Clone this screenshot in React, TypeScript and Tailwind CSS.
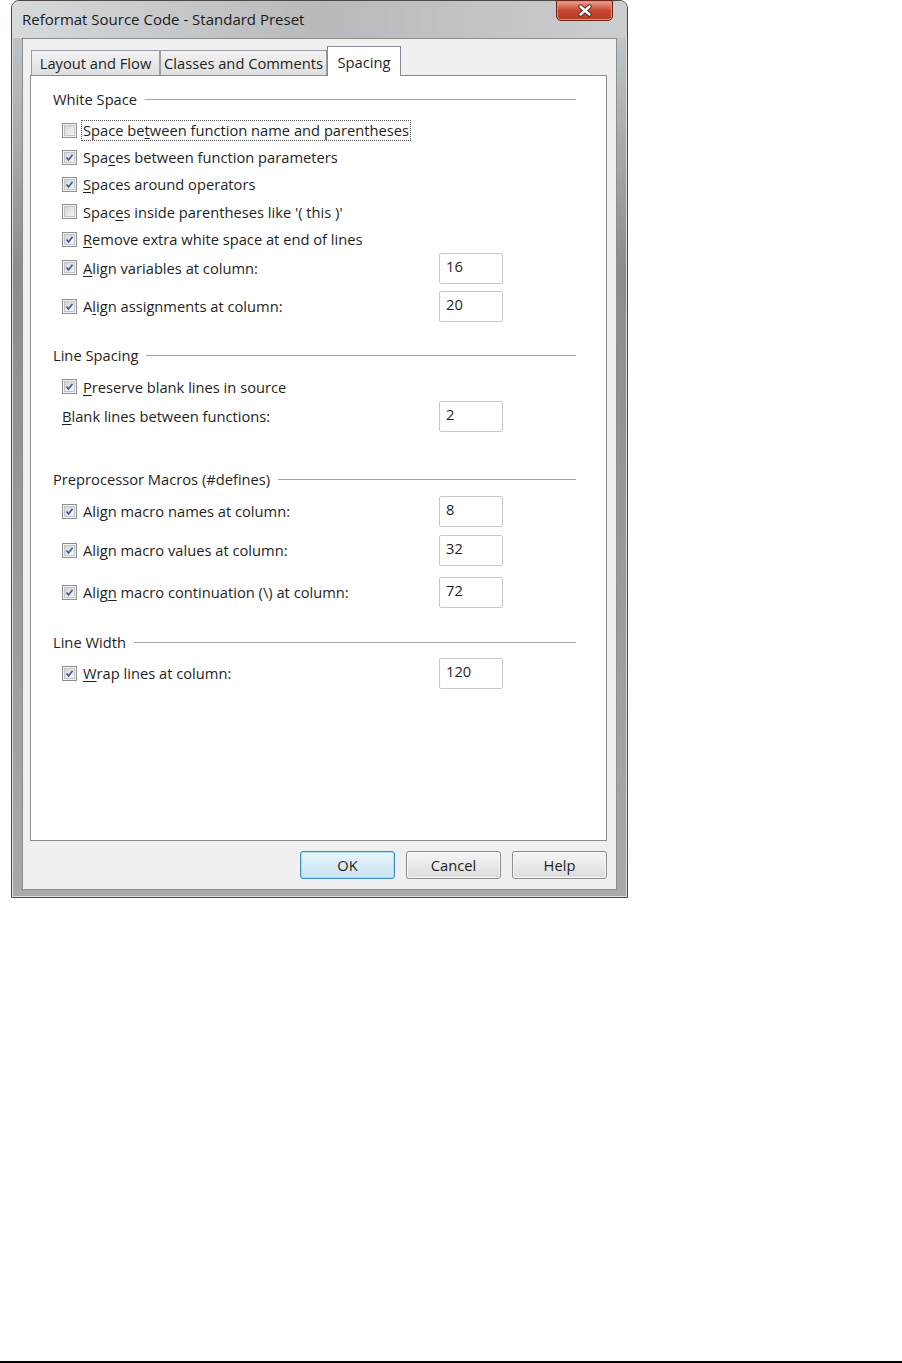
import type { ReactNode } from 'react';

const ink = 'text-[#1f1f1f]';

function Key({ children }: { children: ReactNode }) {
  return <span className="underline decoration-1 underline-offset-[2px]">{children}</span>;
}

function Check({ on }: { on: boolean }) {
  return (
    <span className="flex h-[15px] w-[15px] shrink-0 items-center justify-center border border-[#8e8f8f] bg-[#f4f4f4]">
      <span className="flex h-[11px] w-[11px] items-center justify-center border border-[#c4c4c4] bg-gradient-to-br from-[#d5d5d5] to-[#f7f7f7]">
        {on && (
          <svg width="11" height="11" viewBox="0 0 11 11">
            <path d="M1.8 5.4 L4.3 8.4 L9.2 2" fill="none" stroke="#3a5ba0" strokeWidth="2" />
          </svg>
        )}
      </span>
    </span>
  );
}

function Field({ value }: { value: string }) {
  return (
    <div className={`h-[31px] w-[64px] shrink-0 rounded-[2px] border border-[#c8c8c8] bg-white pl-[6px] pt-[2px] text-[14.7px] leading-[20px] ${ink}`}>
      {value}
    </div>
  );
}

function Header({ title, className }: { title: string; className: string }) {
  return (
    <div className={`flex h-[20px] items-center gap-[8px] pl-[22px] pr-[30px] text-[14.7px] ${ink} ${className}`}>
      <span className="whitespace-nowrap">{title}</span>
      <span className="h-px flex-1 bg-[#a5a5a5] shadow-[0_1px_0_#fff]" />
    </div>
  );
}

function Row({
  on,
  label,
  value,
  className,
  focus,
}: {
  on?: boolean;
  label: ReactNode;
  value?: string;
  className: string;
  focus?: boolean;
}) {
  return (
    <div className={`flex items-center pl-[31px] text-[14.7px] ${ink} ${className}`}>
      <div className="flex w-[377px] items-center gap-[4px]">
        <Check on={!!on} />
        <span className={focus ? 'whitespace-nowrap border border-dotted border-[#555] px-[1px] leading-[19px]' : 'whitespace-nowrap px-[2px]'}>
          {label}
        </span>
      </div>
      {value && <Field value={value} />}
    </div>
  );
}

function Tab({ label, active, className }: { label: string; active?: boolean; className: string }) {
  if (active) {
    return (
      <div className={`relative z-10 -mb-px flex h-[30px] items-start justify-center border border-b-0 border-[#898c95] bg-white pt-[4px] text-[14.7px] ${ink} ${className}`}>
        {label}
      </div>
    );
  }
  return (
    <div className={`flex h-[25px] items-center justify-center border border-b-0 border-[#9a9ca3] bg-gradient-to-b from-[#f3f3f3] to-[#dedede] text-[14.7px] ${ink} ${className}`}>
      {label}
    </div>
  );
}

function Button({ label, primary }: { label: string; primary?: boolean }) {
  return (
    <div
      className={`flex h-[28px] w-[95px] items-center justify-center rounded-[3px] border text-[14.7px] ${ink} ${
        primary
          ? 'border-[#3c8ccc] bg-gradient-to-b from-[#eaf6fd] to-[#c8e2f3] shadow-[inset_0_0_0_1px_#a9dcf5]'
          : 'border-[#8a8a8a] bg-gradient-to-b from-[#f6f6f6] to-[#dcdcdc] shadow-[inset_0_0_0_1px_#fcfcfc]'
      }`}
    >
      {label}
    </div>
  );
}

function Window() {
  return (
    <div className="relative flex h-[898px] w-[617px] flex-col rounded-t-[8px] border border-[#4a4a4a] bg-gradient-to-b from-[#c9cdd0] via-[#8c8c8c] via-30% to-[#a9a9a9] px-[10px] pb-[7px] shadow-[inset_0_0_0_1px_#dcdcdc]">
      {/* title bar */}
      <div className="-mx-[10px] flex h-[37px] items-center rounded-t-[7px] bg-gradient-to-r from-[#d6dadd] via-[#b7b9ba] via-50% to-[#cbcdce] pl-[10px] text-[15px] text-[#1b1b1b]">
        Reformat Source Code - Standard Preset
      </div>
      <div className="absolute right-[14px] top-[-1px] flex h-[21px] w-[57px] items-center justify-center rounded-b-[5px] border border-[#6a2418] bg-gradient-to-b from-[#e9a390] via-[#c9472f] via-50% to-[#b33c24] shadow-[inset_0_0_0_1px_#ee8c72]">
        <svg width="16" height="13" viewBox="0 0 16 13">
          <path d="M3.5 2.5 L12.5 10.5 M12.5 2.5 L3.5 10.5" stroke="#5a2a22" strokeWidth="4.4" strokeLinecap="round" />
          <path d="M3.5 2.5 L12.5 10.5 M12.5 2.5 L3.5 10.5" stroke="#ffffff" strokeWidth="2.4" strokeLinecap="round" />
        </svg>
      </div>

      {/* client area */}
      <div className="flex flex-1 flex-col border border-[#8d8d8d] bg-[#f0f0f0] pl-[7px] pr-[9px] pt-[7px]">
        <div className="flex h-[29px] items-end pl-px">
          <Tab label="Layout and Flow" className="w-[129px]" />
          <Tab label="Classes and Comments" className="w-[167px]" />
          <Tab label="Spacing" active className="w-[74px]" />
        </div>
        <div className="flex h-[766px] w-[577px] flex-col border border-[#898c95] bg-white pt-[13px]">
          <Header title="White Space" className="" />
          <Row
            on={false}
            focus
            className="mt-[7px] h-[28px]"
            label={
              <>
                Space be<Key>t</Key>ween function name and parentheses
              </>
            }
          />
          <Row on className="h-[27px]" label={<>Spa<Key>c</Key>es between function parameters</>} />
          <Row on className="h-[27px]" label={<><Key>S</Key>paces around operators</>} />
          <Row on={false} className="h-[28px]" label={<>Spac<Key>e</Key>s inside parentheses like '( this )'</>} />
          <Row on className="h-[27px]" label={<><Key>R</Key>emove extra white space at end of lines</>} />
          <Row on value="16" className="h-[30px]" label={<><Key>A</Key>lign variables at column:</>} />
          <Row on value="20" className="mt-[8px] h-[31px]" label={<>A<Key>l</Key>ign assignments at column:</>} />

          <Header title="Line Spacing" className="mt-[23px]" />
          <Row on className="mt-[9px] h-[26px]" label={<><Key>P</Key>reserve blank lines in source</>} />
          <div className={`mt-px flex h-[31px] items-center pl-[31px] text-[14.7px] ${ink}`}>
            <span className="w-[377px] whitespace-nowrap">
              <Key>B</Key>lank lines between functions:
            </span>
            <Field value="2" />
          </div>

          <Header title="Preprocessor Macros (#defines)" className="mt-[37px]" />
          <Row on value="8" className="mt-[7px] h-[31px]" label={<>Ali<Key>g</Key>n macro names at column:</>} />
          <Row on value="32" className="mt-[8px] h-[31px]" label={<>Ali<Key>g</Key>n macro values at column:</>} />
          <Row on value="72" className="mt-[11px] h-[31px]" label={<>Alig<Key>n</Key> macro continuation (\) at column:</>} />

          <Header title="Line Width" className="mt-[24px]" />
          <Row on value="120" className="mt-[6px] h-[31px]" label={<><Key>W</Key>rap lines at column:</>} />
        </div>
        <div className="mt-[10px] flex justify-end gap-[11px]">
          <Button label="OK" primary />
          <Button label="Cancel" />
          <Button label="Help" />
        </div>
      </div>
    </div>
  );
}

export default function App() {
  return (
    <div className="flex h-[1363px] w-[902px] flex-col bg-white font-['Open_Sans','Noto_Sans',sans-serif]">
      <div className="pl-[11px]">
        <Window />
      </div>
      <div className="mt-auto h-[2px] w-full bg-black" />
    </div>
  );
}
